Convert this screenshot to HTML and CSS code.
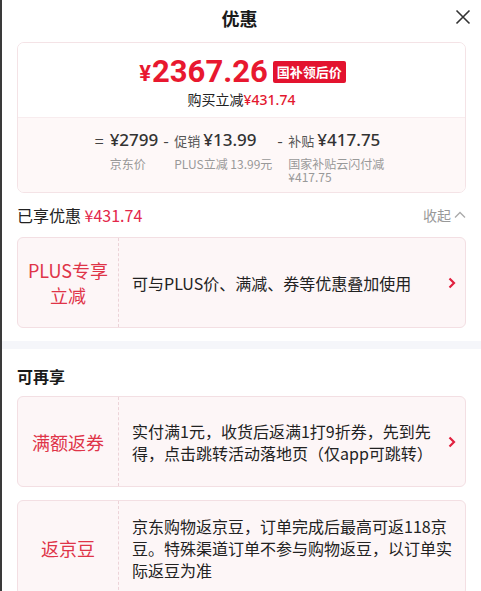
FILE: index.html
```html
<!DOCTYPE html>
<html lang="zh">
<head>
<meta charset="utf-8">
<link rel="stylesheet" href="styles.css">
</head>
<body>
<div class="page">
  <header class="header">
    <h1 class="title">优惠</h1>
    <svg class="close" width="16" height="16" viewBox="0 0 16 16"><path d="M1.5 1.5 L14.5 14.5 M14.5 1.5 L1.5 14.5" stroke="#333" stroke-width="1.6" fill="none"/></svg>
  </header>

  <div class="wrap">
    <section class="summary">
      <div class="summary-top">
        <div class="price-line">
          <span class="yen">¥</span><span class="price">2367.26</span><span class="badge">国补领后价</span>
        </div>
        <div class="reduce">购买立减<span class="red">¥431.74</span></div>
      </div>
      <div class="summary-bottom">
        <div class="item">
          <span class="op eq">=</span>
          <div class="cell">
            <div class="val"><span class="num">¥2799</span></div>
            <div class="lab">京东价</div>
          </div>
        </div>
        <div class="item">
          <span class="op">-</span>
          <div class="cell">
            <div class="val"><span class="tag">促销</span><span class="num">¥13.99</span></div>
            <div class="lab">PLUS立减 13.99元</div>
          </div>
        </div>
        <div class="item">
          <span class="op">-</span>
          <div class="cell narrow">
            <div class="val"><span class="tag">补贴</span><span class="num">¥417.75</span></div>
            <div class="lab">国家补贴云闪付减 ¥417.75</div>
          </div>
        </div>
      </div>
    </section>

    <div class="enjoyed">
      <div class="enjoyed-l">已享优惠 <span class="red2">¥431.74</span></div>
      <div class="fold">收起 <svg width="12" height="8" viewBox="0 0 12 8"><path d="M1 6.5 L6 1.5 L11 6.5" stroke="#aaa" stroke-width="1.3" fill="none"/></svg></div>
    </div>

    <div class="promo">
      <div class="promo-l">PLUS专享<br>立减</div>
      <div class="promo-r">可与PLUS价、满减、券等优惠叠加使用</div>
      <svg class="arrow" width="8" height="12" viewBox="0 0 8 12"><path d="M1.5 1.5 L6 6 L1.5 10.5" stroke="#e1213f" stroke-width="2.2" fill="none"/></svg>
    </div>
  </div>

  <div class="band"></div>

  <div class="wrap">
    <h2 class="sub">可再享</h2>
    <div class="promo">
      <div class="promo-l">满额返券</div>
      <div class="promo-r">实付满1元，收货后返满1打9折券，先到先得，点击跳转活动落地页（仅app可跳转）</div>
      <svg class="arrow" width="8" height="12" viewBox="0 0 8 12"><path d="M1.5 1.5 L6 6 L1.5 10.5" stroke="#e1213f" stroke-width="2.2" fill="none"/></svg>
    </div>
    <div class="promo tall">
      <div class="promo-l">返京豆</div>
      <div class="promo-r wide">京东购物返京豆，订单完成后最高可返118京豆。特殊渠道订单不参与购物返豆，以订单实际返豆为准</div>
    </div>
  </div>
</div>
</body>
</html>
```

FILE: styles.css
```css
* { box-sizing: border-box; }
html, body { margin: 0; padding: 0; }
body {
  background: #fff;
  font-family: "Noto Sans CJK SC", "Noto Sans", sans-serif;
  color: #222;
  width: 481px;
  height: 591px;
  overflow: hidden;
}
.page {
  border-left: 2px solid #3a3a3a;
  min-height: 591px;
}
.header {
  height: 36px;
  display: flex;
  align-items: center;
  justify-content: center;
  position: relative;
}
.title {
  margin: 0;
  font-size: 18px;
  font-weight: 700;
  line-height: 1;
  color: #1a1a1a;
  margin-left: -4px;
}
.close {
  position: absolute;
  right: 10px;
  top: 9px;
}
.wrap {
  padding: 6px 15px 0 15px;
}
.summary {
  border: 1px solid #f4e3e6;
  border-radius: 7px;
  overflow: hidden;
}
.summary-top {
  background: #fff;
  display: flex;
  flex-direction: column;
  align-items: center;
  padding: 11px 0 7px;
  border-bottom: 1px solid #f8ecee;
}
.price-line {
  display: flex;
  align-items: center;
  height: 34px;
  margin-left: 2px;
}
.yen {
  font-family: "Roboto", "Noto Sans", sans-serif;
  font-weight: 700;
  font-size: 22px;
  color: #e8182f;
  margin-top: 4px;
  margin-right: 1px;
}
.price {
  font-family: "Roboto", "Noto Sans", sans-serif;
  font-weight: 700;
  font-size: 31px;
  color: #e8182f;
  letter-spacing: 0;
}
.badge {
  margin-left: 5px;
  margin-top: 2px;
  background: #e3132f;
  color: #fff;
  font-size: 13px;
  font-weight: 700;
  line-height: 22px;
  height: 22px;
  padding: 0 4px;
  border-radius: 2px;
}
.reduce {
  font-size: 14px;
  line-height: 20px;
  color: #222;
  margin-top: 1px;
}
.red { color: #e3172f; font-family: "Noto Sans", sans-serif; font-weight: 500; }
.red2 { color: #e3274a; }
.summary-bottom {
  background: #fef8f8;
  display: flex;
  justify-content: center;
  padding: 10px 0 9px 0;
  gap: 5px;
}
.item {
  display: flex;
  align-items: flex-start;
}
.op {
  font-size: 16px;
  color: #444;
  width: 11px;
  line-height: 24px;
}
.op.eq { width: 15px; }
.cell { display: flex; flex-direction: column; }
.cell.narrow { width: 100px; }
.val {
  display: flex;
  align-items: baseline;
  height: 24px;
  white-space: nowrap;
}
.tag {
  font-size: 13px;
  color: #555;
  margin-right: 3px;
}
.num {
  font-family: "Noto Sans", sans-serif;
  font-size: 17px;
  font-weight: 500;
  color: #333;
  line-height: 24px;
}
.lab {
  font-size: 12px;
  color: #999;
  line-height: 13px;
  margin-top: 5px;
}
.enjoyed {
  display: flex;
  justify-content: space-between;
  align-items: center;
  height: 44px;
}
.enjoyed-l {
  font-size: 16px;
  color: #222;
}
.fold {
  font-size: 14px;
  color: #999;
  display: flex;
  align-items: center;
  gap: 3px;
}
.promo {
  display: flex;
  align-items: center;
  min-height: 91px;
  background: #fdf6f7;
  border: 1px solid #f3dfe3;
  border-radius: 6px;
  margin-bottom: 13px;
}
.promo-l {
  width: 101px;
  flex: none;
  align-self: stretch;
  display: flex;
  align-items: center;
  justify-content: center;
  text-align: center;
  border-right: 1px dashed #ecd3d8;
  color: #df3448;
  font-size: 18px;
  line-height: 25px;
  padding-top: 1px;
}
.promo-r {
  flex: 1;
  padding: 10px 4px 10px 13px;
  font-size: 16px;
  line-height: 22px;
  color: #222;
}
.promo-r.wide { padding-right: 8px; }
.arrow {
  flex: none;
  margin-right: 9px;
}
.promo.tall { min-height: 96px; }
.band {
  height: 8px;
  background: #f5f6fa;
  margin-top: 3px;
}
.sub {
  margin: 0;
  font-size: 16px;
  font-weight: 700;
  line-height: 20px;
  padding: 11px 0 10px;
  color: #1a1a1a;
}
```
